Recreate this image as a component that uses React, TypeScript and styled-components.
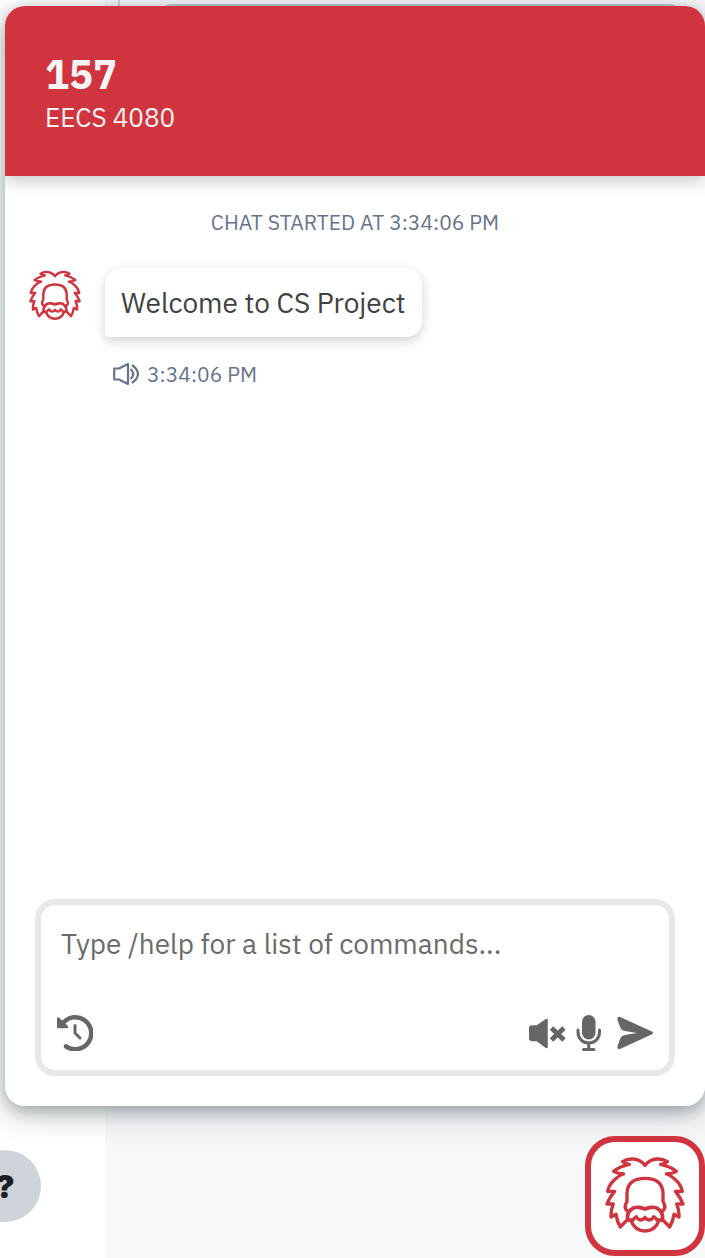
import React from "react";
import styled, { createGlobalStyle } from "styled-components";

const Global = createGlobalStyle`
  *, *::before, *::after { box-sizing: border-box; }
  body { margin: 0; background: #f7f8fa; font-family: "IBM Plex Sans", Roboto, "Liberation Sans", sans-serif; }
  h1, p { margin: 0; }
  button { border: 0; padding: 0; background: none; color: inherit; cursor: pointer; display: block; }
  svg { display: block; }
`;

const Page = styled.div`
  position: relative;
  display: flex;
  flex-direction: column;
  align-items: stretch;
  gap: 30px;
  min-height: 100vh;
  padding: 6px 0 2px 5px;
  overflow: hidden;
`;

const Backdrop = styled.div`
  position: absolute;
  inset: 0;
  display: flex;
`;

const Sidebar = styled.aside`
  display: flex;
  flex-direction: column;
  justify-content: flex-end;
  width: 105px;
  padding-bottom: 36px;
  background: #fff;
`;

const HelpButton = styled.button`
  && {
    width: 72px;
    height: 72px;
    margin-left: -31px;
    border-radius: 50%;
    background: #ced4d9;
    color: #1c1f26;
    font: 900 32px Inter, sans-serif;
  }
`;

const Gutter = styled.div`
  width: 15px;
  height: 100px;
  border-right: 2px solid #d0d3d6;
`;

const Workspace = styled.div`
  flex: 1;
  height: 40px;
  margin: 4px 20px 0 36px;
  border-radius: 16px;
  background: #b9cdcd;
`;

const PanelShadow = styled.div`
  position: relative;
  flex: 1;
  display: flex;
  flex-direction: column;
  border-radius: 20px;
  box-shadow: 0 10px 32px rgba(12, 32, 38, 0.2), 0 4px 16px rgba(12, 32, 38, 0.3);
`;

const Panel = styled.main`
  flex: 1;
  display: flex;
  flex-direction: column;
  border-radius: 20px;
  background: #fff;
  overflow: hidden;
`;

const Header = styled.header`
  height: 170px;
  padding: 44px 40px;
  background: #d0343e;
  color: #f4f4f4;
  box-shadow: 0 4px 16px rgba(0, 0, 0, 0.24);
`;

const Title = styled.h1`
  font-size: 40px;
  line-height: 48px;
  font-weight: 700;
`;

const Subtitle = styled.p`
  font-size: 26px;
  line-height: 38px;
`;

const Messages = styled.section`
  flex: 1;
  padding: 32px 24px;
`;

const Started = styled.p`
  color: #66748b;
  font-size: 21px;
  line-height: 28px;
  text-align: center;
`;

const MessageRow = styled.div`
  display: flex;
  align-items: flex-start;
  gap: 24px;
  margin-top: 32px;
`;

const Avatar = styled.div`
  display: flex;
  justify-content: center;
  width: 52px;
  padding-top: 2px;
`;

const MessageBody = styled.div`
  display: flex;
  flex-direction: column;
  align-items: flex-start;
  gap: 23px;
`;

const Bubble = styled.p`
  padding: 16px;
  border-radius: 16px 16px 16px 4px;
  background: #fff;
  color: #414141;
  font-size: 28px;
  line-height: 37px;
  box-shadow: 0 4px 12px rgba(0, 0, 0, 0.18);
`;

const Stamp = styled.div`
  display: flex;
  align-items: center;
  gap: 8px;
  padding-left: 8px;
  color: #66748b;
  font-size: 21px;
  line-height: 28px;
`;

const Composer = styled.form`
  display: flex;
  flex-direction: column;
  justify-content: space-between;
  height: 177px;
  margin: 0 30px 30px;
  padding: 18px 16px 19px;
  border: 6px solid #e8e8e8;
  border-radius: 20px;
`;

const Input = styled.input`
  width: 100%;
  height: 40px;
  padding: 0 4px;
  border: 0;
  outline: 0;
  background: none;
  font: inherit;
  font-size: 28px;
  color: #414141;
  &::placeholder { color: #6b6b6b; opacity: 1; }
`;

const Tools = styled.div`
  display: flex;
  gap: 8px;
  color: #666;
`;

const HistoryButton = styled.button`
  && { margin-right: auto; }
`;

const Launcher = styled.button`
  && {
    position: relative;
    align-self: flex-end;
    display: grid;
    place-items: center;
    width: 120px;
    height: 120px;
    border: 6px solid #d0343e;
    border-radius: 30px;
    background: #fff;
  }
`;

const HALF_HAIR =
  "M194 106 Q180 88 158 87 Q140 86 127 95 Q134 101 147 103 Q118 109 100 124 Q112 131 130 132 Q118 135 105 147 Q86 163 82 184 L103 184 Q90 198 80 222 L99 222 Q91 240 92 261 L107 253 Q110 275 120 291 L142 268";

function Einstein({ size, weight }: { size: number; weight: number }) {
  return (
    <svg width={size} height={size} viewBox="74 78 240 240" fill="none" stroke="#d0343e" strokeWidth={weight} strokeLinejoin="round" strokeLinecap="round" aria-hidden="true">
      <path d={HALF_HAIR} />
      <path d={HALF_HAIR} transform="matrix(-1 0 0 1 388 0)" />
      <path d="M143 245 Q132 236 135 225 L140 214 V188 Q143 145 194 145 Q245 145 248 188 V214 L253 225 Q256 236 245 245" />
      <path d="M142 270 C138 244 156 230 176 232 Q187 234 194 237 Q201 234 212 232 C232 230 250 244 246 270" strokeWidth={weight + 1} />
      <path d="M142 270 L158 270 Q161 263 168 260 Q172 269 181 270 Q190 269 194 262 Q198 269 207 270 Q216 269 220 260 Q227 263 230 270 L246 270" />
      <path d="M152 272 Q164 303 194 303 Q224 303 236 272" />
    </svg>
  );
}

const Glyph = ({ children }: { children: React.ReactNode }) => (
  <svg width="36" height="36" viewBox="0 0 36 36" fill="none" stroke="currentColor" strokeLinecap="round" strokeLinejoin="round" aria-hidden="true">
    {children}
  </svg>
);

export default function App() {
  return (
    <>
      <Global />
      <Page>
        <Backdrop>
          <Sidebar>
            <HelpButton type="button" aria-label="Help">?</HelpButton>
          </Sidebar>
          <Gutter />
          <Workspace />
        </Backdrop>
        <PanelShadow>
          <Panel>
            <Header>
              <Title>157</Title>
              <Subtitle>EECS 4080</Subtitle>
            </Header>
            <Messages>
              <Started>CHAT STARTED AT 3:34:06 PM</Started>
              <MessageRow>
                <Avatar>
                  <Einstein size={52} weight={11} />
                </Avatar>
                <MessageBody>
                  <Bubble>Welcome to CS Project</Bubble>
                  <Stamp>
                    <button type="button" aria-label="Read aloud">
                      <svg width="26" height="24" viewBox="0 0 26 24" fill="none" stroke="currentColor" strokeWidth="2.2" strokeLinejoin="round" aria-hidden="true">
                        <path d="M1.200 6.500H6L15 2V22L6 17.500H1.200Z M17.500 7Q23 12 17.500 17 M19 3Q31 12 19 21" />
                      </svg>
                    </button>
                    <time>3:34:06 PM</time>
                  </Stamp>
                </MessageBody>
              </MessageRow>
            </Messages>
            <Composer onSubmit={(e) => e.preventDefault()}>
              <Input aria-label="Message" placeholder="Type /help for a list of commands..." />
              <Tools>
                <HistoryButton type="button" aria-label="History">
                  <Glyph>
                    <path d="M6 8A16 16 0 1 1 9 31.300" strokeWidth="4.500" />
                    <path d="M18 10.500V18L23 23" strokeWidth="3" />
                    <path d="M1 3.500V12H10Z" fill="currentColor" strokeWidth="2.500" />
                  </Glyph>
                </HistoryButton>
                <button type="button" aria-label="Mute">
                  <Glyph>
                    <path d="M3 11.500H8L17.500 5V32L8 25H3Q1 25 1 23V13.500Q1 11.500 3 11.500Z" fill="currentColor" strokeWidth="2.500" />
                    <path d="M22.500 13L35 25M35 13L22.500 25" strokeWidth="5" strokeLinecap="butt" />
                  </Glyph>
                </button>
                <button type="button" aria-label="Speak">
                  <Glyph>
                    <rect x="9" y="0" width="13.500" height="24.500" rx="6.700" fill="currentColor" stroke="none" />
                    <path d="M5 15V17C5 24 10 28 15.700 28S26.500 24 26.500 17V15M15.700 28V34M10.500 34.500H21" strokeWidth="3" />
                  </Glyph>
                </button>
                <button type="submit" aria-label="Send">
                  <Glyph>
                    <path d="M0.500 5Q0 1 3 2L35 16.500Q37 18 35 19.200L3 34Q0 35 0.500 31L3.500 23Q4.500 20.500 8 20L20 18L8 16Q4.500 15.500 3.500 13Z" fill="currentColor" stroke="none" />
                  </Glyph>
                </button>
              </Tools>
            </Composer>
          </Panel>
        </PanelShadow>
        <Launcher type="button" aria-label="Toggle chat">
          <Einstein size={80} weight={10} />
        </Launcher>
      </Page>
    </>
  );
}
